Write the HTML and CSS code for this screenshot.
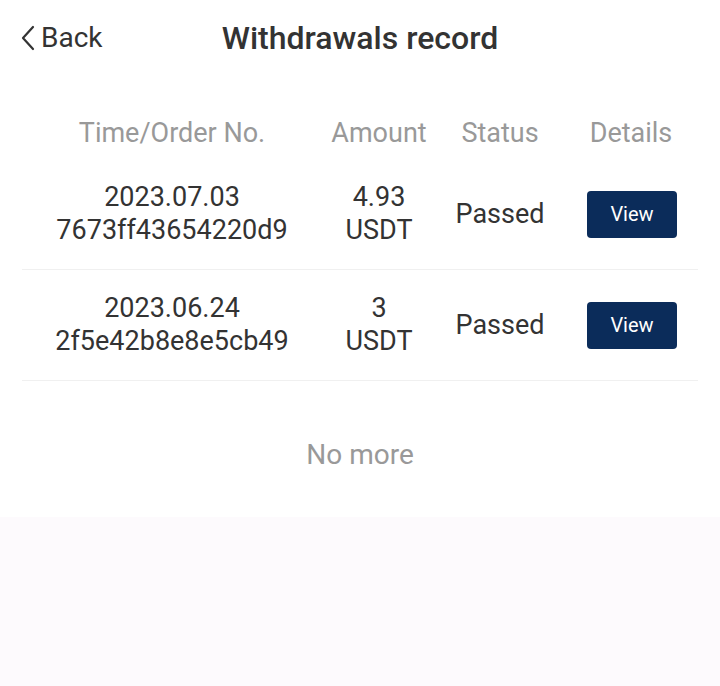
FILE: index.html
```html
<!DOCTYPE html>
<html lang="en">

<head>
    <meta charset="UTF-8">
    <meta name="viewport" content="width=device-width, initial-scale=1.0">
    <title>Withdrawals record</title>
    <link rel="stylesheet" href="styles.css">
</head>

<body>
    <div class="page">
        <header class="nav-bar">
            <a class="back" href="#">
                <svg class="back-icon" width="16" height="26" viewBox="0 0 16 26">
                    <path d="M13 2 L3 13 L13 24" fill="none" stroke="#333" stroke-width="2.2" stroke-linecap="round" stroke-linejoin="round" />
                </svg>
                <span>Back</span>
            </a>
            <h1>Withdrawals record</h1>
        </header>

        <div class="records">
            <div class="row head">
                <div>Time/Order No.</div>
                <div>Amount</div>
                <div>Status</div>
                <div>Details</div>
            </div>

            <div class="row item">
                <div>2023.07.03<br>7673ff43654220d9</div>
                <div>4.93<br>USDT</div>
                <div>Passed</div>
                <div><button class="view-btn">View</button></div>
            </div>

            <div class="row item">
                <div>2023.06.24<br>2f5e42b8e8e5cb49</div>
                <div>3<br>USDT</div>
                <div>Passed</div>
                <div><button class="view-btn">View</button></div>
            </div>

            <p class="no-more">No more</p>
        </div>
    </div>
</body>

</html>
```

FILE: styles.css
```css
body {
    font-family: Roboto, "Noto Sans", Arial, sans-serif;
    background-color: #fdfafd;
    margin: 0;
    color: #333;
}

.page {
    background: #fff;
}

.nav-bar {
    position: relative;
    height: 76px;
    display: flex;
    align-items: center;
    justify-content: center;
}

.back {
    position: absolute;
    left: 20px;
    top: 21px;
    display: flex;
    align-items: center;
    gap: 5px;
    color: #333;
    text-decoration: none;
    font-size: 28px;
}

.nav-bar h1 {
    margin: 0;
    font-size: 32px;
    font-weight: 500;
    color: #333;
}

.records {
    padding: 30px 22px 0;
}

.row {
    display: grid;
    grid-template-columns: 300px 114px 128px 1fr;
    align-items: center;
    text-align: center;
}

.head {
    height: 53px;
    color: #999;
    font-size: 27px;
}

.item {
    height: 110px;
    border-bottom: 1px solid #f0f0f0;
    font-size: 27px;
    line-height: 33px;
}

.view-btn {
    width: 90px;
    height: 47px;
    margin-left: 2px;
    background-color: #0b2c5a;
    color: #fff;
    border: none;
    border-radius: 4px;
    font-family: inherit;
    font-size: 20px;
    cursor: pointer;
}

.no-more {
    margin: 0;
    padding: 57px 0 46px;
    text-align: center;
    color: #999;
    font-size: 28px;
    line-height: 33px;
}
```
